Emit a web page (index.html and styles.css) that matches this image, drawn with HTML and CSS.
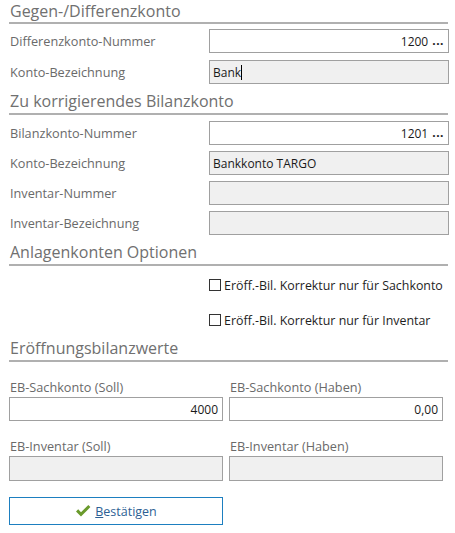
FILE: index.html
```html
<!DOCTYPE html>
<html lang="de">
<head>
<meta charset="utf-8">
<link rel="stylesheet" href="styles.css">
</head>
<body>
<div class="form">
  <h2 class="head first">Gegen-/Differenzkonto</h2>
  <div class="row r-first">
    <span class="label">Differenzkonto-Nummer</span>
    <div class="field white num"><span>1200</span><span class="dots">...</span></div>
  </div>
  <div class="row r-wide">
    <span class="label">Konto-Bezeichnung</span>
    <div class="field"><span>Bank</span><span class="caret"></span></div>
  </div>

  <h2 class="head">Zu korrigierendes Bilanzkonto</h2>
  <div class="row">
    <span class="label">Bilanzkonto-Nummer</span>
    <div class="field white num"><span>1201</span><span class="dots">...</span></div>
  </div>
  <div class="row">
    <span class="label">Konto-Bezeichnung</span>
    <div class="field"><span>Bankkonto TARGO</span></div>
  </div>
  <div class="row">
    <span class="label">Inventar-Nummer</span>
    <div class="field"></div>
  </div>
  <div class="row">
    <span class="label">Inventar-Bezeichnung</span>
    <div class="field"></div>
  </div>

  <h2 class="head">Anlagenkonten Optionen</h2>
  <div class="checks">
    <label class="check"><span class="box"></span>Eröff.-Bil. Korrektur nur für Sachkonto</label>
    <label class="check"><span class="box"></span>Eröff.-Bil. Korrektur nur für Inventar</label>
  </div>

  <h2 class="head h4">Eröffnungsbilanzwerte</h2>
  <div class="grid">
    <div class="cell">
      <span class="label">EB-Sachkonto (Soll)</span>
      <div class="field white num"><span>4000</span></div>
    </div>
    <div class="cell">
      <span class="label">EB-Sachkonto (Haben)</span>
      <div class="field white num"><span>0,00</span></div>
    </div>
    <div class="cell">
      <span class="label">EB-Inventar (Soll)</span>
      <div class="field tall"></div>
    </div>
    <div class="cell">
      <span class="label">EB-Inventar (Haben)</span>
      <div class="field tall"></div>
    </div>
  </div>

  <button class="btn" type="button">
    <svg width="16" height="14" viewBox="0 0 16 14"><path d="M1 7.5 L3.2 5.3 L6 8.2 L13.3 1 L15.4 3.1 L6 12.6 Z" fill="#6a9a2c"/></svg>
    <span><u>B</u>estätigen</span>
  </button>
</div>
</body>
</html>
```

FILE: styles.css
```css
html, body {
  margin: 0;
  padding: 0;
  background: #ffffff;
}
body {
  font-family: "Open Sans", "Noto Sans", sans-serif;
  color: #222;
}
.form {
  width: 440px;
  padding: 0 6px 0 9px;
  display: flex;
  flex-direction: column;
}
.head {
  margin: 5px 0 0 0;
  height: 24px;
  line-height: 24px;
  font-size: 16px;
  font-weight: 400;
  color: #707070;
  border-bottom: 2px solid #b0b0b0;
  width: 438px;
  padding-left: 1px;
  box-sizing: content-box;
}
.head.first {
  margin-top: 0;
  height: 22px;
  line-height: 22px;
}
.row {
  display: grid;
  grid-template-columns: 200px 240px;
  align-items: center;
  margin-top: 6px;
}
.row.r-first { margin-top: 5px; }
.row.r-wide { margin-top: 7px; }
.label {
  font-size: 12.7px;
  color: #6a6a6a;
  padding-left: 1px;
}
.field {
  height: 24px;
  box-sizing: border-box;
  border: 1px solid #a0a0a0;
  background: #f0f0f0;
  font-size: 12px;
  color: #1a1a1a;
  display: flex;
  align-items: center;
  padding: 0 4px 0 3px;
}
.field.white { background: #ffffff; }
.field.num { justify-content: flex-end; }
.dots {
  font-weight: 700;
  margin-left: 4px;
  letter-spacing: 0.5px;
  position: relative;
  top: -1px;
}
.caret {
  display: inline-block;
  width: 1px;
  height: 15px;
  background: #000;
}
.checks {
  display: flex;
  flex-direction: column;
  padding-left: 200px;
  padding-top: 13px;
  gap: 23px;
  height: 70px;
  box-sizing: border-box;
}
.check {
  display: flex;
  align-items: center;
  font-size: 12.4px;
  color: #1e1e1e;
  height: 12px;
}
.box {
  width: 12px;
  height: 12px;
  box-sizing: border-box;
  border: 1px solid #333;
  background: #fff;
  margin-right: 3px;
  flex: none;
}
.head.h4 { margin-top: 0; }
.grid {
  display: grid;
  grid-template-columns: 214px 214px;
  column-gap: 6px;
  row-gap: 15px;
  margin-top: 15px;
}
.cell {
  display: flex;
  flex-direction: column;
}
.cell .label { line-height: 20px; }
.cell .field.tall { height: 25px; }
.btn {
  margin-top: 16px;
  width: 214px;
  height: 28px;
  border: 1px solid #1d7fc0;
  background: #fff;
  display: flex;
  align-items: center;
  justify-content: center;
  gap: 4px;
  font-family: "Open Sans", "Noto Sans", sans-serif;
  font-size: 12.5px;
  color: #2d5f94;
  padding: 0;
}
.btn svg { display: block; }
```
